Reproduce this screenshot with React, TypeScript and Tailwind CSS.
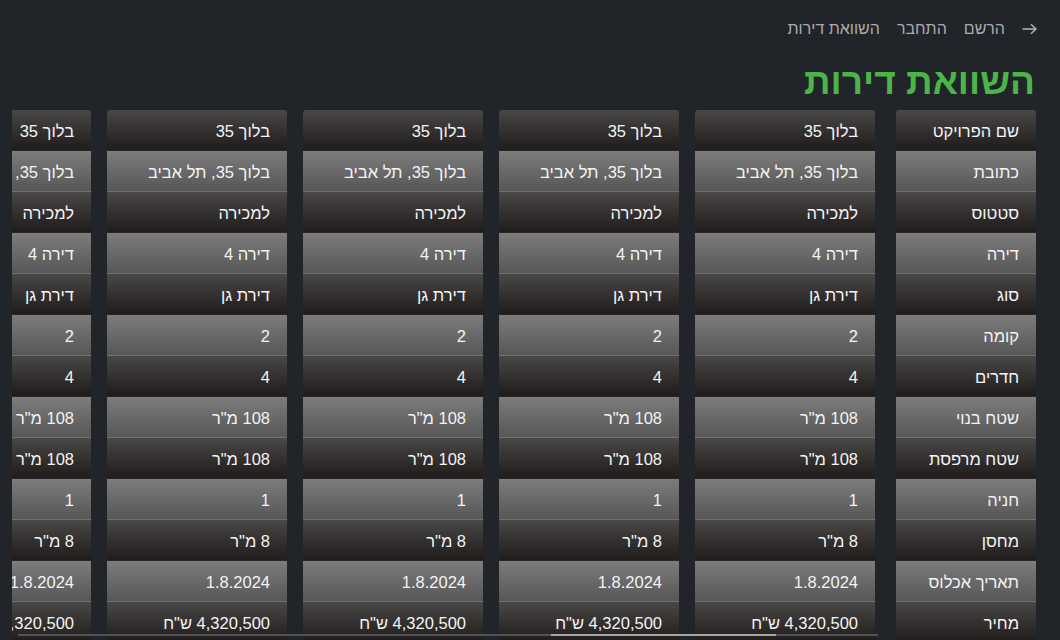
import React from 'react';

const rows: { label: string; value: string }[] = [
  { label: 'שם הפרויקט', value: 'בלוך 35' },
  { label: 'כתובת', value: 'בלוך 35, תל אביב' },
  { label: 'סטטוס', value: 'למכירה' },
  { label: 'דירה', value: 'דירה 4' },
  { label: 'סוג', value: 'דירת גן' },
  { label: 'קומה', value: '2' },
  { label: 'חדרים', value: '4' },
  { label: 'שטח בנוי', value: '108 מ"ר' },
  { label: 'שטח מרפסת', value: '108 מ"ר' },
  { label: 'חניה', value: '1' },
  { label: 'מחסן', value: '8 מ"ר' },
  { label: 'תאריך אכלוס', value: '1.8.2024' },
  { label: 'מחיר', value: '4,320,500 ש"ח' },
];

const apartments = [1, 2, 3, 4, 5, 6];

const Cell: React.FC<{ index: number; text: string }> = ({ index, text }) => {
  const light = index % 2 === 1;
  const first = index === 0;
  return (
    <div
      className={`flex items-center justify-start whitespace-nowrap pr-[17px] pt-[2px] text-[16.5px] text-[#f3f3f3] ${
        first
          ? 'h-[40px] rounded-t-[3px]'
          : light
          ? 'h-[41px] border-t border-[#2a2626]'
          : 'h-[41px] border-t border-[#707070]'
      } ${light ? 'bg-gradient-to-b from-[#7c7c7c] to-[#575757]' : 'bg-gradient-to-b from-[#4a4747] to-[#201c1c]'}`}
    >
      {text}
    </div>
  );
};

export default function App() {
  return (
    <div
      dir="rtl"
      className="relative h-[640px] overflow-hidden bg-[#212429] font-['Liberation_Sans','Open_Sans',sans-serif]"
    >
      {/* top nav */}
      <nav className="flex h-[39px] items-end gap-[17px] pr-[23px] text-[16px] leading-[20px] text-[#a9abae]">
        <svg width="15" height="12" viewBox="0 0 15 12" fill="none" stroke="#b4b6b9" strokeWidth="1.4" className="mb-[4px]">
          <path d="M0.5 6h13.5M9 1.2l5 4.8-5 4.8" />
        </svg>
        <span>הרשם</span>
        <span>התחבר</span>
        <span>השוואת דירות</span>
      </nav>

      <h1 className="mt-[21px] pr-[25px] text-[37px] font-semibold leading-[44px] text-[#4cb548]">
        השוואת דירות
      </h1>

      {/* comparison table */}
      <div className="mt-[6px] flex gap-[21px] pl-[12px] pr-[24px]">
        <div className="w-[140px] shrink-0">
          {rows.map((r, i) => (
            <Cell key={r.label} index={i} text={r.label} />
          ))}
        </div>
        <div className="flex min-w-0 flex-1 gap-[16px] overflow-hidden">
          {apartments.map((a) => (
            <div key={a} className="w-[180px] shrink-0">
              {rows.map((r, i) => (
                <Cell key={r.label} index={i} text={r.value} />
              ))}
            </div>
          ))}
        </div>
      </div>

      {/* horizontal scrollbar */}
      <div className="absolute left-[18px] top-[634px] h-[2px] w-[860px] bg-[#505257]">
        <div className="absolute left-[533px] top-0 h-[2px] w-[225px] bg-[#a6a6a6]" />
      </div>
    </div>
  );
}
